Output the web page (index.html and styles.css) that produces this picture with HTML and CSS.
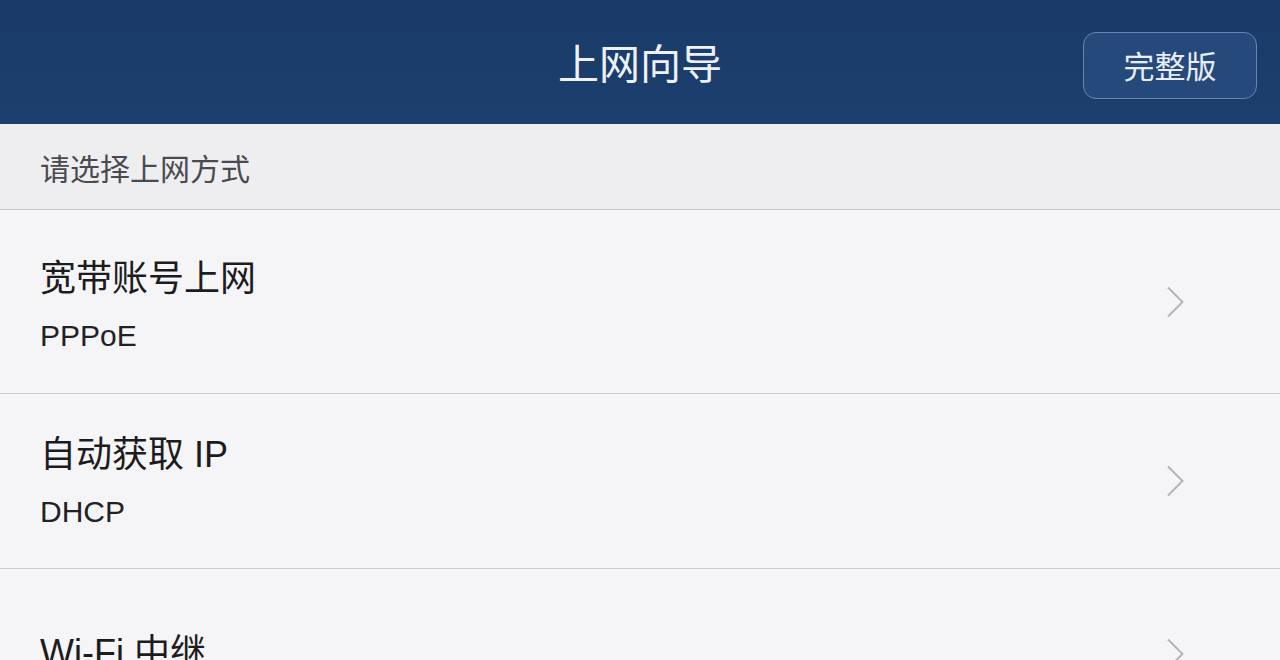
FILE: index.html
```html
<!DOCTYPE html>
<html lang="zh-CN">
<head>
<meta charset="utf-8">
<title>上网向导</title>
<link rel="stylesheet" href="styles.css">
</head>
<body>
<header class="topbar">
  <div class="topbar-spacer"></div>
  <h1 class="topbar-title">上网向导</h1>
  <div class="topbar-actions">
    <button class="full-btn" type="button">完整版</button>
  </div>
</header>
<div class="section-label">请选择上网方式</div>
<ul class="options">
  <li class="option option--first">
    <div class="option-text">
      <div class="option-title">宽带账号上网</div>
      <div class="option-sub">PPPoE</div>
    </div>
    <svg class="chevron" viewBox="0 0 18 32" width="18" height="32"><path d="M2 1.5 L16.5 16 L2 30.5" fill="none" stroke="#b3b3b8" stroke-width="2"/></svg>
  </li>
  <li class="option option--second">
    <div class="option-text">
      <div class="option-title">自动获取 IP</div>
      <div class="option-sub">DHCP</div>
    </div>
    <svg class="chevron" viewBox="0 0 18 32" width="18" height="32"><path d="M2 1.5 L16.5 16 L2 30.5" fill="none" stroke="#b3b3b8" stroke-width="2"/></svg>
  </li>
  <li class="option option--third">
    <div class="option-text">
      <div class="option-title">Wi-Fi 中继</div>
    </div>
    <svg class="chevron" viewBox="0 0 18 32" width="18" height="32"><path d="M2 1.5 L16.5 16 L2 30.5" fill="none" stroke="#b3b3b8" stroke-width="2"/></svg>
  </li>
</ul>
</body>
</html>
```

FILE: styles.css
```css
* { box-sizing: border-box; }
html, body {
  margin: 0;
  padding: 0;
  height: 100%;
  overflow: hidden;
}
body {
  background: #f4f4f6;
  font-family: "Noto Sans CJK SC", "Noto Sans", sans-serif;
  color: #1f1f22;
}
.topbar {
  height: 124px;
  background: linear-gradient(#1a3b6a, #1c3f6e);
  display: grid;
  grid-template-columns: 1fr auto 1fr;
  align-items: center;
}
.topbar-title {
  margin: 0;
  font-size: 41px;
  font-weight: 400;
  color: #eef2f8;
  letter-spacing: 0;
  line-height: 1;
  padding-bottom: 2px;
}
.topbar-actions {
  display: flex;
  justify-content: flex-end;
  padding-right: 23px;
}
.full-btn {
  width: 174px;
  height: 67px;
  border: 1.5px solid #6885ae;
  border-radius: 13px;
  background: #25497b;
  color: #e8eef7;
  font-family: inherit;
  font-size: 31px;
  line-height: 1;
  padding: 0 0 2px;
  margin-top: 7px;
}
.section-label {
  height: 86px;
  background: #eeeef0;
  border-bottom: 1px solid #c9c9cd;
  display: flex;
  align-items: center;
  padding-left: 40px;
  font-size: 30px;
  color: #4a4a50;
}
.options {
  list-style: none;
  margin: 0;
  padding: 0;
}
.option {
  display: flex;
  align-items: center;
  justify-content: space-between;
  padding: 0 96px 0 40px;
  border-bottom: 1px solid #cdcdd1;
  background: #f5f5f7;
}
.option--first { height: 184px; }
.option--second { height: 175px; }
.option--third { height: 170px; }
.option-text {
  align-self: flex-start;
  font-family: "Liberation Sans", "Noto Sans CJK SC", sans-serif;
}
.option--first .option-text { padding-top: 47px; }
.option--second .option-text { padding-top: 39px; }
.option--third .option-text { padding-top: 62px; }
.option-title {
  font-size: 36px;
  line-height: 44px;
  color: #1c1c1f;
}
.option-sub {
  font-size: 30px;
  line-height: 40px;
  margin-top: 15px;
  color: #222226;
}
.chevron {
  display: block;
  flex: none;
}
```
